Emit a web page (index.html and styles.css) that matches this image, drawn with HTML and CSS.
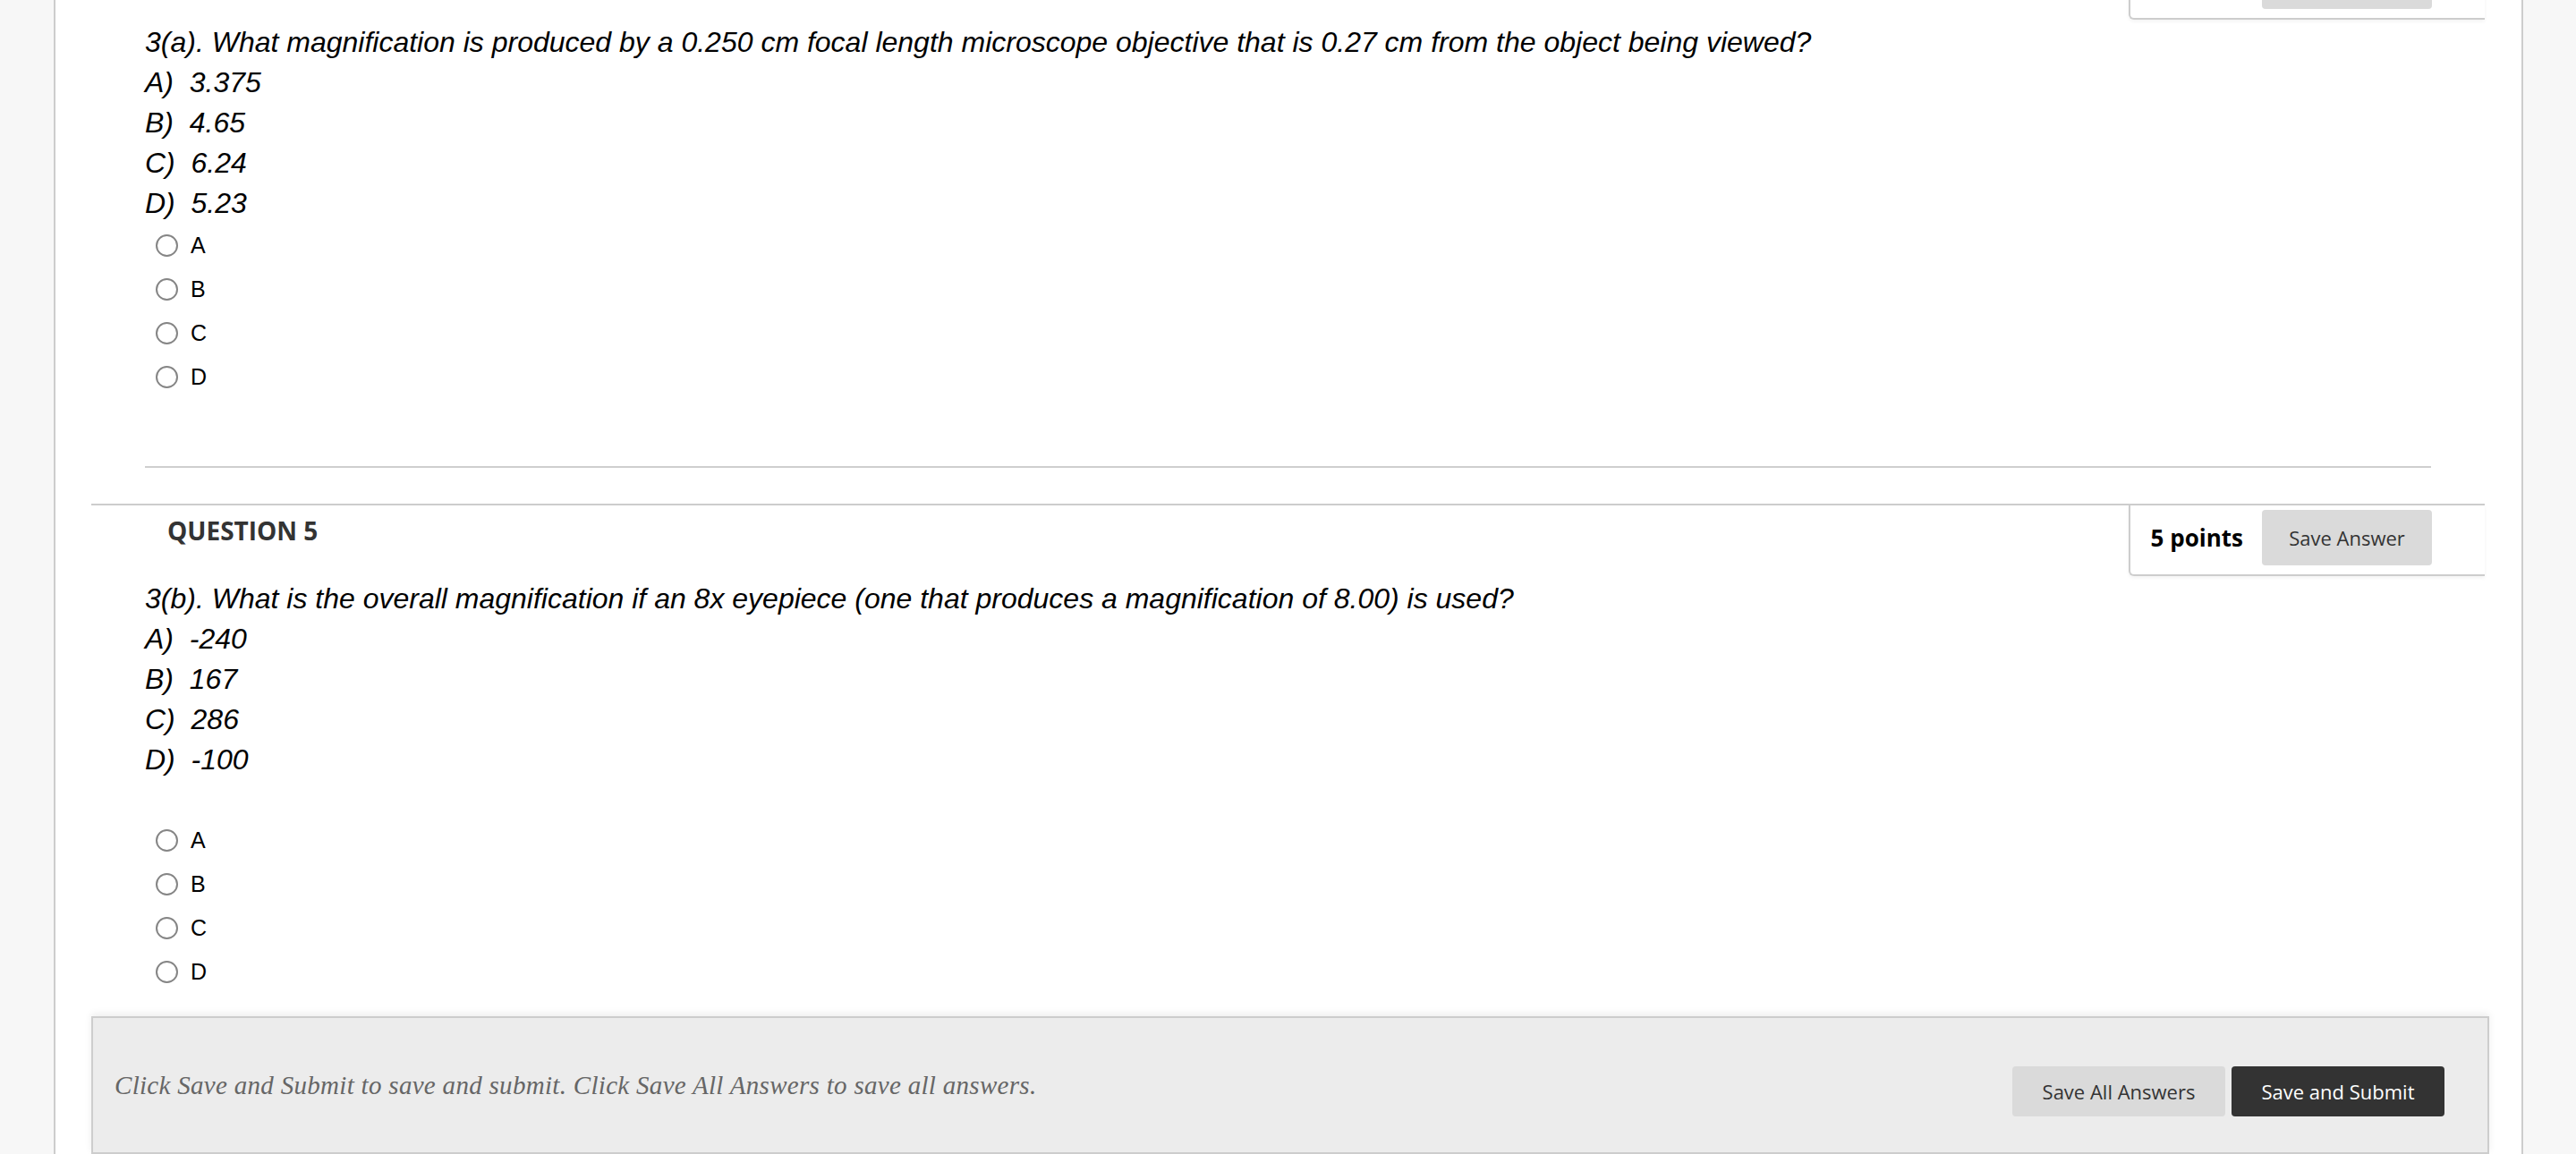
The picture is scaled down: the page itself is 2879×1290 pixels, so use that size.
FILE: index.html
```html
<!DOCTYPE html>
<html lang="en">
<head>
<meta charset="utf-8">
<title>Test</title>
<link rel="stylesheet" href="styles.css">
</head>
<body>
<div class="page">
  <div class="questions">
    <section class="question question--prev">
      <header class="q-head">
        <h3 class="q-title">QUESTION 4</h3>
        <div class="points">
          <span class="points-value">5 points</span>
          <button class="btn btn-save">Save Answer</button>
        </div>
      </header>
      <div class="q-body">
        <p class="q-text">3(a). What magnification is produced by a 0.250 cm focal length microscope objective that is 0.27 cm from the object being viewed?</p>
        <p class="q-text">A)&nbsp; 3.375</p>
        <p class="q-text">B)&nbsp; 4.65</p>
        <p class="q-text">C)&nbsp; 6.24</p>
        <p class="q-text">D)&nbsp; 5.23</p>
        <ul class="options">
          <li class="opt"><input class="radio" type="radio" name="q4" id="q4a"><label class="opt-label" for="q4a">A</label></li>
          <li class="opt"><input class="radio" type="radio" name="q4" id="q4b"><label class="opt-label" for="q4b">B</label></li>
          <li class="opt"><input class="radio" type="radio" name="q4" id="q4c"><label class="opt-label" for="q4c">C</label></li>
          <li class="opt"><input class="radio" type="radio" name="q4" id="q4d"><label class="opt-label" for="q4d">D</label></li>
        </ul>
        <hr class="q-rule">
      </div>
    </section>

    <section class="question">
      <header class="q-head">
        <h3 class="q-title">QUESTION 5</h3>
        <div class="points">
          <span class="points-value">5 points</span>
          <button class="btn btn-save">Save Answer</button>
        </div>
      </header>
      <div class="q-body">
        <p class="q-text">3(b). What is the overall magnification if an 8x eyepiece (one that produces a magnification of 8.00) is used?</p>
        <p class="q-text">A)&nbsp; -240</p>
        <p class="q-text">B)&nbsp; 167</p>
        <p class="q-text">C)&nbsp; 286</p>
        <p class="q-text">D)&nbsp; -100</p>
        <p class="q-text spacer">&nbsp;</p>
        <ul class="options">
          <li class="opt"><input class="radio" type="radio" name="q5" id="q5a"><label class="opt-label" for="q5a">A</label></li>
          <li class="opt"><input class="radio" type="radio" name="q5" id="q5b"><label class="opt-label" for="q5b">B</label></li>
          <li class="opt"><input class="radio" type="radio" name="q5" id="q5c"><label class="opt-label" for="q5c">C</label></li>
          <li class="opt"><input class="radio" type="radio" name="q5" id="q5d"><label class="opt-label" for="q5d">D</label></li>
        </ul>
      </div>
    </section>

    <div class="submit-bar">
      <p class="submit-text">Click Save and Submit to save and submit. Click Save All Answers to save all answers.</p>
      <div class="submit-actions">
        <button class="btn btn-bar">Save All Answers</button>
        <button class="btn btn-bar btn-dark">Save and Submit</button>
      </div>
    </div>
  </div>
</div>
</body>
</html>
```

FILE: styles.css
```css
html, body {
  margin: 0;
  padding: 0;
}

body {
  background: #f7f7f7;
  font-family: "Liberation Sans", Arial, sans-serif;
  color: #000;
}

.page {
  margin: 0 59px 0 60px;
  background: #fff;
  border-left: 2px solid #cdcdcd;
  border-right: 2px solid #cdcdcd;
  min-height: 100vh;
  display: flow-root;
}

.questions {
  padding: 0 36px 20px 40px;
}

.question {
  border-top: 2px solid #cdcdcd;
  margin-right: 5px;
}

.question--prev {
  margin-top: -59px;
}

.q-head {
  display: flex;
  justify-content: space-between;
  align-items: flex-start;
  min-height: 82px;
}

.q-title {
  margin: 0;
  padding: 9px 0 0 85px;
  font: 700 28px/38px "Open Sans", sans-serif;
  color: #333;
}

.points {
  display: flex;
  align-items: center;
  gap: 21px;
  padding: 5px 59px 10px 23px;
  border-left: 2px solid #cdcdcd;
  border-bottom: 2px solid #cdcdcd;
  border-bottom-left-radius: 6px;
  box-shadow: 0 2px 4px rgba(0, 0, 0, 0.05);
  background: #fff;
}

.points-value {
  font: 700 26px/36px "Open Sans", sans-serif;
  color: #000;
}

.btn {
  font: 400 22px/1 "Open Sans", sans-serif;
  color: #333;
  background: #dadada;
  border: 0;
  border-radius: 4px;
  padding: 0;
  cursor: pointer;
}

.btn-save {
  width: 190px;
  height: 62px;
}

.q-body {
  padding: 0 60px;
}

.q-text {
  margin: 0;
  font: italic 32px/45px "Liberation Sans", Arial, sans-serif;
  color: #000;
}

.spacer {
  line-height: 43px;
}

.options {
  list-style: none;
  margin: 0;
  padding: 0;
}

.opt {
  display: flex;
  align-items: center;
  height: 49px;
}

.radio {
  appearance: none;
  -webkit-appearance: none;
  flex: 0 0 auto;
  box-sizing: border-box;
  width: 25px;
  height: 25px;
  margin: 0 14px 0 12px;
  border: 2px solid #858585;
  border-radius: 50%;
  background: #fff;
}

.opt-label {
  font: 25px/1 "Liberation Sans", Arial, sans-serif;
  color: #000;
}

.q-rule {
  margin: 75px 0 40px;
  border: 0;
  border-top: 2px solid #cfcfcf;
  height: 0;
}

.submit-bar {
  display: flex;
  justify-content: space-between;
  align-items: flex-start;
  margin-top: 25px;
  background: #ececec;
  border: 2px solid #cdcdcd;
  padding: 54px 48px 40px 24px;
  box-shadow: 0 -3px 8px rgba(0, 0, 0, 0.07);
}

.submit-text {
  margin: 0;
  font: italic 29px/42px "Liberation Serif", "Times New Roman", serif;
  letter-spacing: 0.3px;
  color: #666;
}

.submit-actions {
  display: flex;
  gap: 7px;
}

.btn-bar {
  width: 238px;
  height: 56px;
}

.btn-dark {
  background: #333;
  color: #fff;
}
```
